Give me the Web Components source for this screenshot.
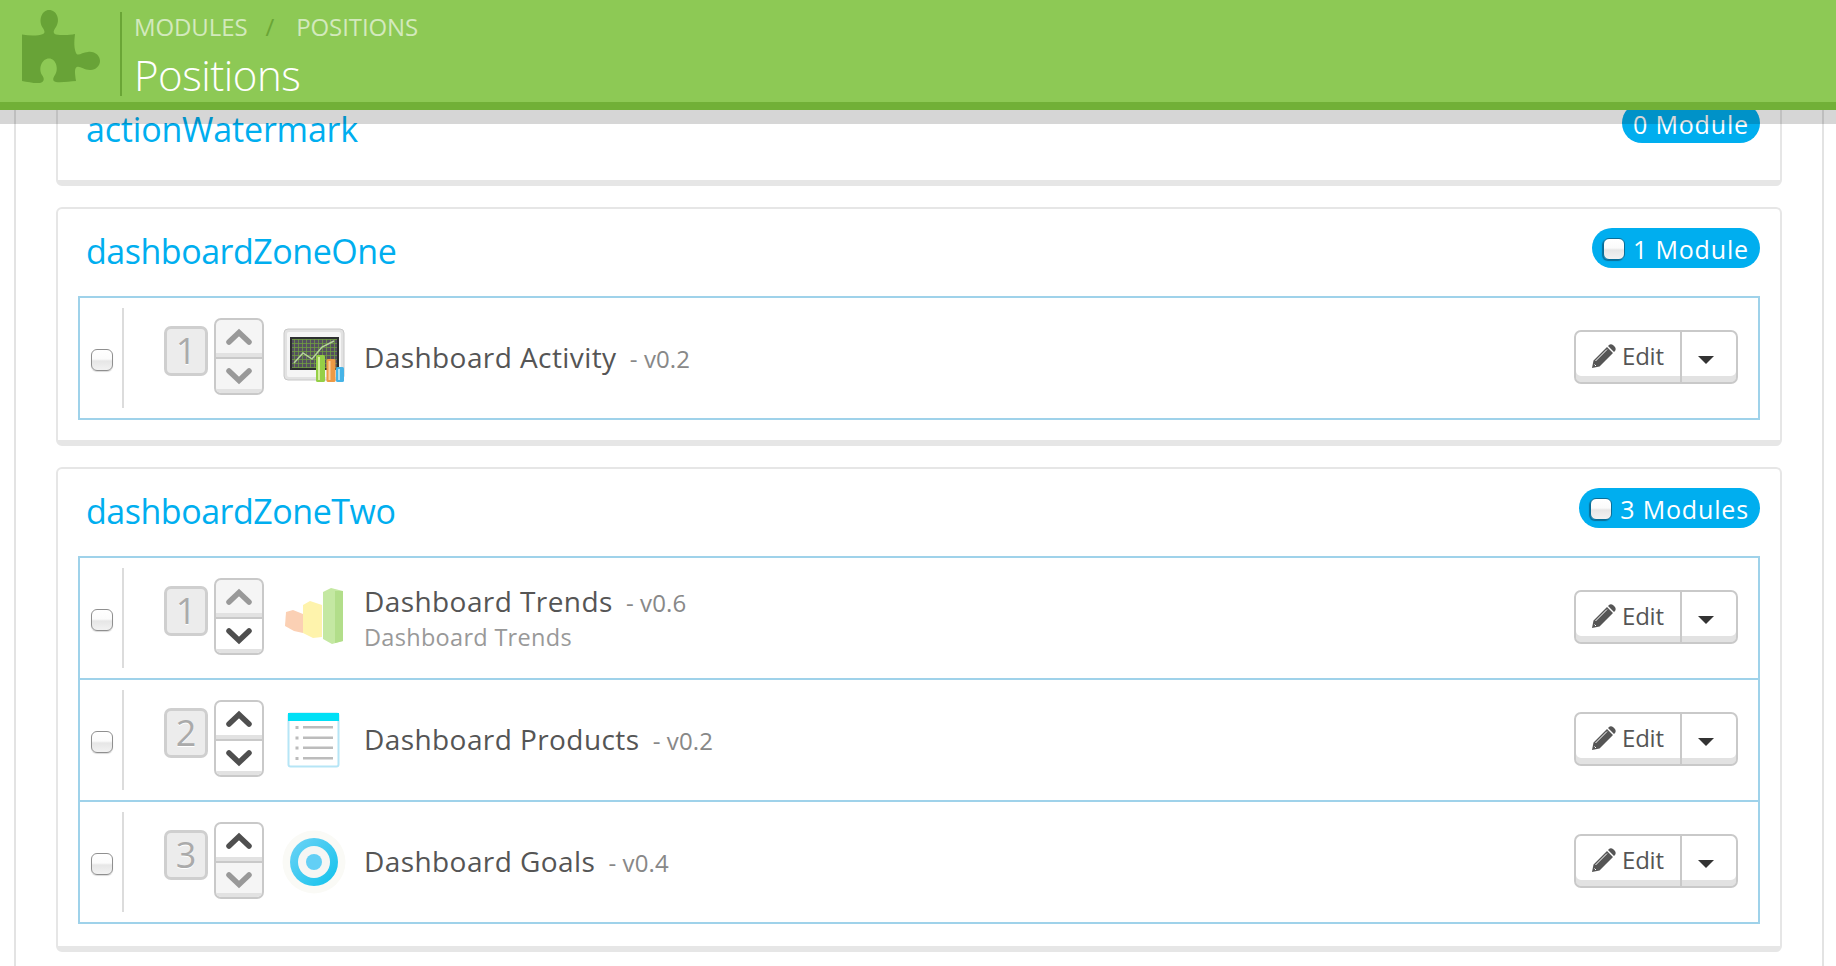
<!DOCTYPE html>
<html lang="en">
<head>
<meta charset="utf-8">
<title>Positions</title>
<style>
	html, body { margin: 0; height: 100%; background: #fff; }
	body { font-family: "Open Sans", "Liberation Sans", sans-serif; overflow: hidden; height: 966px; }
</style>
</head>
<body>
<page-header>
	<span slot="crumb-a">MODULES</span>
	<span slot="crumb-b">POSITIONS</span>
	Positions
</page-header>
<page-content>
	<position-card name="actionWatermark" count="0 Module" style="--title-top: 22px; --title-track: -.18px"></position-card>
	<position-card name="dashboardZoneOne" count="1 Module" check>
		<position-list>
			<module-row pos="1" icon="activity" up="off" down="off">
				Dashboard Activity
				<span slot="version">- v0.2</span>
			</module-row>
		</position-list>
	</position-card>
	<position-card name="dashboardZoneTwo" count="3 Modules" check style="padding-bottom: 11px">
		<position-list>
			<module-row pos="1" icon="trends" up="off" down="on">
				Dashboard Trends
				<span slot="version">- v0.6</span>
				<span slot="sub">Dashboard Trends</span>
			</module-row>
			<module-row pos="2" icon="products" up="on" down="on">
				Dashboard Products
				<span slot="version">- v0.2</span>
			</module-row>
			<module-row pos="3" icon="goals" up="on" down="off">
				Dashboard Goals
				<span slot="version">- v0.4</span>
			</module-row>
		</position-list>
	</position-card>
</page-content>

<script>
// Casilla dibujada a mano, la nativa no se parece a la de Mac
class NiceCheck extends HTMLElement {
	constructor() {
		super();
		this.attachShadow({ mode: 'open' });
		this.shadowRoot.innerHTML = `
			<style>
				:host { display: block; width: 22px; height: 22px; }
				input {
					appearance: none;
					display: block;
					box-sizing: border-box;
					width: 22px;
					height: 22px;
					margin: 0;
					border: 1px solid var(--check-border, #8f8f8f);
					border-radius: 6px;
					background: linear-gradient(#fff 0, #fbfbfb 45%, #e6e6e6 55%, #f2f2f2 100%);
					box-shadow: var(--check-shadow, 0 1px 1px rgba(0, 0, 0, .15));
				}
			</style>
			<input type="checkbox">
		`;
	}
}
customElements.define('nice-check', NiceCheck);

class PageHeader extends HTMLElement {
	constructor() {
		super();
		this.attachShadow({ mode: 'open' });
		this.shadowRoot.innerHTML = `
			<style>
				:host {
					display: flex;
					position: absolute;
					top: 0;
					left: 0;
					right: 0;
					z-index: 5;
					box-sizing: border-box;
					height: 110px;
					background: #8dc955;
					border-bottom: 8px solid #71b037;
					box-shadow: 0 14px 0 rgba(0, 0, 0, .16);
					color: #fff;
				}
				svg { display: block; width: 120px; height: 102px; flex: none; }
				.info {
					margin: 12px 0 6px;
					padding-left: 12px;
					border-left: 2px solid #6aa536;
					height: 84px;
				}
				.crumbs {
					display: flex;
					font-size: 24px;
					line-height: 30px;
					letter-spacing: -.1px;
					color: #d3e9bd;
				}
				.sep { color: #6aa536; margin: 0 22px 0 18px; }
				h1 { margin: 8px 0 0; font-size: 42px; font-weight: 300; line-height: 50px; letter-spacing: -.5px; }
			</style>
			<svg viewBox="0 0 120 102" aria-hidden="true">
				<path fill="#68a337" d="M22 34.5C30 36 38 36 43 34C45.500 33 44.500 30 42.500 27.500C38 20 42 10 49 10C57 10 60.500 20 56 27C53.500 30.500 52.500 33 56 34.500C62 35.500 70 35.200 75 34C74 42 74 48 76 53C78 57 82 52 88 52C95 51 100 56 100 61C100 66 95 70.500 90 70C84 70 80 66 77 67C74 68 75 74 76 81C70 81 62 83 56 82C52 81 53 78 55 75C59 69 56 58.500 49 58.500C42 58.500 38 68 42 75C45 79 44 82 40 83C34 83.500 28 82 22 81Z"/>
			</svg>
			<div class="info">
				<div class="crumbs"><slot name="crumb-a"></slot><span class="sep">/</span><slot name="crumb-b"></slot></div>
				<h1><slot></slot></h1>
			</div>
		`;
	}
}
customElements.define('page-header', PageHeader);

class PageContent extends HTMLElement {
	constructor() {
		super();
		this.attachShadow({ mode: 'open' });
		this.shadowRoot.innerHTML = `
			<style>
				:host {
					display: flex;
					flex-direction: column;
					gap: 21px;
					box-sizing: border-box;
					height: 966px;
					margin: 0 12px 0 14px;
					padding: 82px 40px 0 40px;
					border-left: 2px solid #e3e3e3;
					border-right: 2px solid #e3e3e3;
					overflow: hidden;
				}
			</style>
			<slot></slot>
		`;
	}
}
customElements.define('page-content', PageContent);

class PositionCard extends HTMLElement {
	constructor() {
		super();
		this.attachShadow({ mode: 'open' });
		const check = this.hasAttribute('check') ? '<nice-check></nice-check>' : '';
		this.shadowRoot.innerHTML = `
			<style>
				:host {
					display: block;
					flex: none;
					box-sizing: border-box;
					padding: 0 20px 9px 20px;
					border: 2px solid #e6e6e6;
					border-bottom-width: 6px;
					border-radius: 6px;
					background: #fff;
				}
				.head {
					display: flex;
					justify-content: space-between;
					align-items: flex-start;
					height: 87px;
				}
				h3 {
					margin: var(--title-top, 19px) 0 0 8px;
					font-size: 34px;
					font-weight: 400;
					line-height: 46px;
					letter-spacing: var(--title-track, -.47px);
					color: #00aeef;
				}
				.badge {
					display: flex;
					align-items: center;
					gap: 8px;
					box-sizing: border-box;
					height: 40px;
					margin-top: 19px;
					padding: 1px 11px 0 11px;
					border-radius: 20px;
					background: #00aeef;
					color: #fff;
					font-size: 25px;
					font-weight: 500;
					letter-spacing: .85px;
					--check-border: #0a6d96;
					--check-shadow: -1px 1px 1px #0a6d96;
				}
				.badge nice-check { margin-top: 1px; }
				::slotted(position-list) { margin-bottom: 11px; }
			</style>
			<div class="head">
				<h3>${this.getAttribute('name')}</h3>
				<div class="badge">${check}<span>${this.getAttribute('count')}</span></div>
			</div>
			<slot></slot>
		`;
	}
}
customElements.define('position-card', PositionCard);

class PositionList extends HTMLElement {
	constructor() {
		super();
		this.attachShadow({ mode: 'open' });
		this.shadowRoot.innerHTML = `
			<style>
				:host {
					display: flex;
					flex-direction: column;
					gap: 2px;
					background: #9fd2ea;
					border: 2px solid #9fd2ea;
				}
			</style>
			<slot></slot>
		`;
	}
}
customElements.define('position-list', PositionList);

// Flechas de subir y bajar. Atributos up y down: on | off
class SortArrows extends HTMLElement {
	constructor() {
		super();
		this.attachShadow({ mode: 'open' });
		const chevron = (dir, state) => `
			<div class="btn ${dir} ${state}">
				<svg width="26" height="18" viewBox="0 0 26 18">
					<polyline points="${dir === 'up' ? '3,14 13,4.500 23,14' : '3,4 13,13.500 23,4'}"/>
				</svg>
			</div>`;
		this.shadowRoot.innerHTML = `
			<style>
				:host {
					display: flex;
					flex-direction: column;
					box-sizing: border-box;
					width: 50px;
					height: 77px;
					border: 2px solid #c9c9c9;
					border-radius: 7px;
					overflow: hidden;
					background: #c9c9c9;
					gap: 2px;
				}
				.btn {
					flex: 1;
					display: flex;
					align-items: center;
					justify-content: center;
					padding-bottom: 4px;
					box-shadow: inset 0 -4px 0 #e2e2e2;
				}
				.down { padding-bottom: 1px; }
				.on { background: #fff; --chev: #4f4f4f; }
				.off { background: #f5f5f5; --chev: #999; }
				polyline { fill: none; stroke: var(--chev); stroke-width: 5.500; stroke-linecap: round; stroke-linejoin: miter; }
			</style>
			${chevron('up', this.getAttribute('up'))}
			${chevron('down', this.getAttribute('down'))}
		`;
	}
}
customElements.define('sort-arrows', SortArrows);

const MODULE_ICONS = {
	activity: `
		<defs><pattern id="grid" width="4" height="4" patternUnits="userSpaceOnUse">
			<rect width="4" height="4" fill="#55505f"/><path d="M0 0H4M0 0V4" stroke="#6fa040" stroke-width="1.500"/>
		</pattern></defs>
		<rect x="2" y="6" width="60" height="51" rx="4" fill="#e2e2e2" stroke="#c8c8c8"/>
		<rect x="5" y="9" width="54" height="45" rx="2" fill="#f5f5f5"/>
		<rect x="8" y="14" width="49" height="33" fill="#2d2f30"/>
		<rect x="10" y="16" width="45" height="29" fill="url(#grid)"/>
		<polyline points="12,40 21,30 30,36 40,24 52,18" fill="none" stroke="#b5d39a" stroke-width="1.500"/>
		<rect x="34" y="32" width="9" height="27" rx="1.500" fill="#95cf46"/>
		<rect x="36" y="34" width="2" height="23" fill="#d4ee9e"/>
		<rect x="44.500" y="36" width="9" height="23" rx="1.500" fill="#ee9a45"/>
		<rect x="46.500" y="38" width="2" height="19" fill="#f9cf9a"/>
		<rect x="54" y="44" width="8" height="15" rx="1.500" fill="#46b3e6"/>
		<rect x="56" y="46" width="2" height="11" fill="#a9e0f7"/>`,
	trends: `
		<g filter="url(#soft)">
			<path d="M4 29L11 27L21 31V50L12 48L3 43Z" fill="#fbd0b4"/>
			<path d="M21 22L28 18L40 22V54L31 55L21 50Z" fill="#fef3ac"/>
			<path d="M41 9L49 5L61 8V58L50 61L41 56Z" fill="#c4e8a2"/>
			<path d="M53 8L61 8V58L53 60Z" fill="#b2de8a"/>
		</g>
		<filter id="soft"><feGaussianBlur stdDeviation=".7"/></filter>`,
	products: `
		<rect x="6.500" y="8.500" width="50" height="53" rx="2" fill="#fff" stroke="#b6e5f6" stroke-width="2"/>
		<rect x="6" y="8" width="51" height="8" fill="#00e0f6"/>
		<g fill="#bcbcbc">
			<rect x="13.500" y="21" width="3" height="3"/><rect x="21" y="21" width="30" height="2.500"/>
			<rect x="13.500" y="31.500" width="3" height="3"/><rect x="21" y="31.500" width="30" height="2.500"/>
			<rect x="13.500" y="41.500" width="3" height="3"/><rect x="21" y="41.500" width="30" height="2.500"/>
			<rect x="13.500" y="52" width="3" height="3"/><rect x="21" y="52" width="30" height="2.500"/>
		</g>`,
	goals: `
		<defs><linearGradient id="ring" x1="0" y1="0" x2="1" y2="1">
			<stop offset="0" stop-color="#6fd3f6"/><stop offset="1" stop-color="#10c2ec"/>
		</linearGradient></defs>
		<circle cx="32" cy="35" r="31.500" fill="#fafaf6"/>
		<circle cx="32" cy="35" r="24" fill="url(#ring)"/>
		<circle cx="32" cy="35" r="16" fill="#f6f6f4"/>
		<circle cx="32" cy="35" r="8" fill="#63cff5"/>`
};

class ModuleIcon extends HTMLElement {
	constructor() {
		super();
		this.attachShadow({ mode: 'open' });
		this.shadowRoot.innerHTML = `
			<style>
				:host { display: block; width: 64px; height: 64px; }
				svg { display: block; filter: blur(.4px); overflow: visible; }
			</style>
			<svg width="64" height="64" viewBox="0 0 64 64" aria-hidden="true">${MODULE_ICONS[this.getAttribute('type')]}</svg>
		`;
	}
}
customElements.define('module-icon', ModuleIcon);

class EditButton extends HTMLElement {
	constructor() {
		super();
		this.attachShadow({ mode: 'open' });
		this.shadowRoot.innerHTML = `
			<style>
				:host {
					display: flex;
					box-sizing: border-box;
					width: 164px;
					height: 54px;
					border: 2px solid #c9c9c9;
					border-radius: 7px;
					overflow: hidden;
					background: #fff;
					box-shadow: inset 0 -6px 0 #e2e2e2;
					color: #555;
				}
				.edit {
					box-sizing: border-box;
					width: 106px;
					display: flex;
					align-items: center;
					gap: 6px;
					padding: 0 0 3px 16px;
					border-right: 2px solid #c9c9c9;
					font-size: 24px;
					letter-spacing: -.2px;
				}
				.caret { flex: 1; display: flex; align-items: center; justify-content: center; padding: 5px 6px 0 0; }
				svg { display: block; flex: none; }
			</style>
			<div class="edit">
				<svg width="24" height="24" viewBox="0 0 24 24" aria-hidden="true">
					<path fill="#555" d="M0 24L1.500 16.500L15 3L21 9L7.500 22.500ZM16.500 1.500C18 0 19.500 0 21 1L23 3C24 4.500 24 6 22.500 7.500L22 8L16 2Z"/>
					<path stroke="#fff" stroke-width="1" fill="none" d="M3.500 17L15 5.500M2.500 20.500L4 22"/>
				</svg>
				<slot></slot>
			</div>
			<div class="caret">
				<svg width="16" height="8" viewBox="0 0 16 8" aria-hidden="true"><path fill="#333" d="M0 0H16L8 8Z"/></svg>
			</div>
		`;
	}
}
customElements.define('edit-button', EditButton);

class ModuleRow extends HTMLElement {
	constructor() {
		super();
		this.attachShadow({ mode: 'open' });
		this.shadowRoot.innerHTML = `
			<style>
				:host {
					display: flex;
					align-items: center;
					height: 120px;
					background: #fff;
					color: #555;
				}
				nice-check { margin: 4px 9px 0 11px; }
				.rule { width: 2px; height: 100px; background: #dcdcdc; margin-right: 40px; }
				.pos {
					box-sizing: border-box;
					width: 44px;
					height: 50px;
					margin: -14px 6px 0 0;
					border: 3px solid #cfcfcf;
					border-radius: 7px;
					background: #ececec;
					color: #aaa;
					font-size: 36px;
					line-height: 44px;
					text-align: center;
					text-shadow: 0 1px 0 #fff;
				}
				sort-arrows { margin: -3px 18px 0 0; }
				module-icon { margin: -6px 18px 0 0; }
				.text { flex: 1; min-width: 0; }
				.name { font-size: 28px; line-height: 36px; letter-spacing: .42px; }
				.ver { font-size: 24px; letter-spacing: .1px; color: #888; margin-left: 5.500px; }
				.sub { font-size: 23.500px; line-height: 32px; letter-spacing: .3px; color: #999; }
				.sub:empty { display: none; }
				edit-button { margin: -2px 20px 0 0; }
			</style>
			<nice-check></nice-check>
			<div class="rule"></div>
			<div class="pos">${this.getAttribute('pos')}</div>
			<sort-arrows up="${this.getAttribute('up')}" down="${this.getAttribute('down')}"></sort-arrows>
			<module-icon type="${this.getAttribute('icon')}"></module-icon>
			<div class="text">
				<div class="name"><slot></slot><span class="ver"><slot name="version"></slot></span></div>
				<div class="sub"><slot name="sub"></slot></div>
			</div>
			<edit-button>Edit</edit-button>
		`;
	}
}
customElements.define('module-row', ModuleRow);
</script>
</body>
</html>
